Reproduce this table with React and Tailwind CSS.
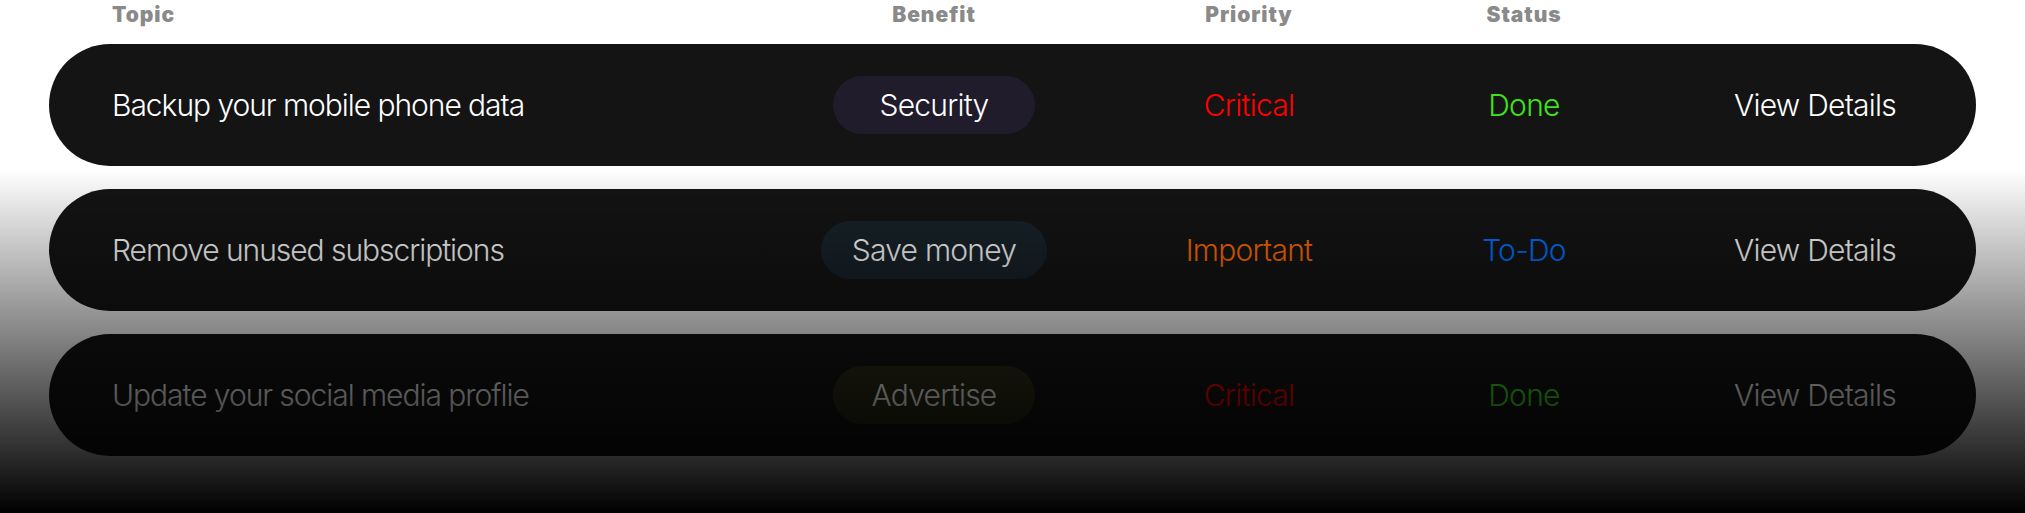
const tasks = [
  {
    topic: 'Backup your mobile phone data',
    benefit: 'Security',
    pill: 'bg-[#201c2c]',
    priority: 'Critical',
    priorityColor: 'text-[#ff0000]',
    status: 'Done',
    statusColor: 'text-[#3fe31a]',
  },
  {
    topic: 'Remove unused subscriptions',
    benefit: 'Save money',
    pill: 'bg-[#18232a]',
    priority: 'Important',
    priorityColor: 'text-[#ff6a00]',
    status: 'To-Do',
    statusColor: 'text-[#0070ff]',
  },
  {
    topic: 'Update your social media proflie',
    benefit: 'Advertise',
    pill: 'bg-[#2c2c18]',
    priority: 'Critical',
    priorityColor: 'text-[#ff0000]',
    status: 'Done',
    statusColor: 'text-[#3fe31a]',
  },
];

const TaskRow = ({ task }) => (
  <div className="flex items-center h-[122px] rounded-full bg-[#141414] px-[63px] font-['Inter_Light','Inter',sans-serif] text-[30px] font-light tracking-[-0.025em] text-white">
    <div className="w-[664px] shrink-0 tracking-[-0.035em]">{task.topic}</div>
    <div className="w-[316px] shrink-0 flex justify-center">
      <span className={`min-w-[202px] h-[58px] px-[31px] rounded-full flex items-center justify-center ${task.pill}`}>
        {task.benefit}
      </span>
    </div>
    <div className={`w-[314px] shrink-0 text-center ${task.priorityColor}`}>{task.priority}</div>
    <div className={`w-[236px] shrink-0 text-center ${task.statusColor}`}>{task.status}</div>
    <div className="w-[346px] shrink-0 text-center">View Details</div>
  </div>
);

export default function App() {
  return (
    <div className="relative h-[513px] overflow-hidden bg-white font-['Inter',sans-serif]">
      <div className="px-[49px]">
        {/* Header */}
        <div className="flex h-[44px] pt-[2px] px-[63px] font-['Inter_Black','Inter',sans-serif] text-[21px] leading-[26px] font-black tracking-[0.045em] text-[#8a8a8a]">
          <div className="w-[664px] shrink-0">Topic</div>
          <div className="w-[316px] shrink-0 text-center">Benefit</div>
          <div className="w-[314px] shrink-0 text-center">Priority</div>
          <div className="w-[236px] shrink-0 text-center">Status</div>
          <div className="w-[346px] shrink-0" />
        </div>

        <div className="flex flex-col gap-[23px]">
          {tasks.map((task, i) => (
            <TaskRow key={i} task={task} />
          ))}
        </div>
      </div>

      {/* Fade out */}
      <div className="pointer-events-none absolute inset-0 bg-linear-to-b from-transparent from-[33%] to-black" />
    </div>
  );
}
